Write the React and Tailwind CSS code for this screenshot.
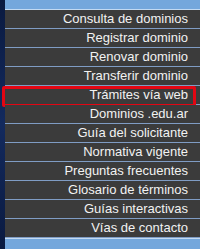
import React from 'react';

const items = [
  'Consulta de dominios',
  'Registrar dominio',
  'Renovar dominio',
  'Transferir dominio',
  'Trámites vía web',
  'Dominios .edu.ar',
  'Guía del solicitante',
  'Normativa vigente',
  'Preguntas frecuentes',
  'Glosario de términos',
  'Guías interactivas',
  'Vías de contacto',
];

function App() {
  return (
    <div className="flex w-[200px] h-[249px] overflow-hidden bg-[#0b1c44]" style={{ fontFamily: '"Liberation Sans", Arial, sans-serif' }}>
      <div className="w-[5px] shrink-0 bg-gradient-to-b from-[#0a1a40] via-[#132a5e] to-[#0a1a40]" />
      <div className="flex-1 flex flex-col">
        <div className="h-[9px] bg-[#74a7dc]" />
        <div className="h-px bg-[#c3daf2]" />
        <ul className="flex flex-col">
          {items.map((item, i) => (
            <li key={item} className="relative h-[19px] bg-[#3b3b3b] border-b border-[#7f9cc4] text-right pr-[12px] text-[13px] leading-[18px] text-[#f2f2f2]">
              {item}
              {i === 4 && (
                <div className="absolute left-[-3px] right-[4px] top-0 bottom-[-3px] border-[3px] border-[#e30613] rounded-[2px]" />
              )}
            </li>
          ))}
        </ul>
        <div className="h-px bg-[#c3daf2]" />
        <div className="flex-1 bg-[#74a7dc]" />
      </div>
    </div>
  );
}

export default App;
